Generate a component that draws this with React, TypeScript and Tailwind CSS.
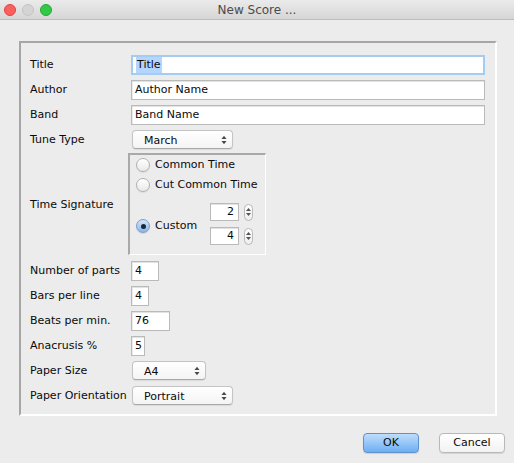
import React from "react";

function UpDown({ className = "" }: { className?: string }) {
  return (
    <svg width="6" height="10" viewBox="0 0 6 10" className={className}>
      <path d="M0.5 4 L3 0.8 L5.5 4 Z" fill="#4a4a4a" />
      <path d="M0.5 6 L3 9.2 L5.5 6 Z" fill="#4a4a4a" />
    </svg>
  );
}

function Select({ value, w }: { value: string; w: string }) {
  return (
    <div
      className={`${w} h-[19px] rounded-[4px] border border-[#c4c4c4] border-b-[#a9a9a9] bg-gradient-to-b from-white to-[#f4f4f4] shadow-[0_1px_1px_rgba(0,0,0,0.08)] flex items-center pl-[11px] pr-[5px]`}
    >
      <span className="flex-1 leading-none pt-[1px]">{value}</span>
      <UpDown />
    </div>
  );
}

function Field({ value, w, focus = false }: { value: React.ReactNode; w: string; focus?: boolean }) {
  return (
    <div
      className={`${w} h-[20px] bg-white flex items-center pl-[3px] pt-[1px] ${
        focus
          ? "border-2 border-[#a4cbf2]"
          : "border border-[#bababa] shadow-[inset_0_1px_0_#e2e2e2,inset_1px_0_0_#ececec]"
      }`}
    >
      {value}
    </div>
  );
}

function Radio({ checked = false }: { checked?: boolean }) {
  return checked ? (
    <div className="w-[14px] h-[14px] rounded-full border border-[#7d9dc4] bg-gradient-to-b from-[#d3e5f9] to-[#86b6ec] flex items-center justify-center shadow-[0_1px_1px_rgba(0,0,0,0.1)]">
      <div className="w-[5px] h-[5px] rounded-full bg-[#1d2533]" />
    </div>
  ) : (
    <div className="w-[14px] h-[14px] rounded-full border border-[#b0b0b0] bg-gradient-to-b from-white to-[#e9e9e9] shadow-[0_1px_1px_rgba(0,0,0,0.08)]" />
  );
}

function Spin({ value }: { value: string }) {
  return (
    <div className="flex items-center gap-[5px]">
      <div className="w-[29px] h-[18px] bg-white border border-[#bababa] shadow-[inset_0_1px_0_#e2e2e2] flex items-center justify-end pr-[4px] pt-[1px]">
        {value}
      </div>
      <div className="w-[9px] h-[17px] rounded-[5px] border border-[#b9b9b9] bg-gradient-to-b from-white to-[#eeeeee] flex flex-col items-center justify-center gap-[2px]">
        <svg width="5" height="3" viewBox="0 0 5 3"><path d="M0 3 L2.5 0 L5 3 Z" fill="#555" /></svg>
        <svg width="5" height="3" viewBox="0 0 5 3"><path d="M0 0 L2.5 3 L5 0 Z" fill="#555" /></svg>
      </div>
    </div>
  );
}

function Row({ label, children }: { label: string; children: React.ReactNode }) {
  return (
    <div className="flex items-center h-[25px]">
      <div className="w-[101px] whitespace-nowrap pt-[1px]">{label}</div>
      {children}
    </div>
  );
}

export default function App() {
  return (
    <div className="w-[514px] h-[463px] bg-[#ececec] overflow-hidden text-[11px] text-[#0a0a0a] font-['DejaVu_Sans',sans-serif]">
      <div className="h-[20px] grid grid-cols-[1fr_auto_1fr] items-center bg-gradient-to-b from-[#ebebeb] to-[#d6d6d6] border-b border-[#bdbdbd]">
        <div className="flex items-center gap-[6px] pl-[4px]">
          <div className="w-[12px] h-[12px] rounded-full bg-[#fc605c] border border-[#e0443e]" />
          <div className="w-[12px] h-[12px] rounded-full bg-[#d4d4d4] border border-[#c4c4c4]" />
          <div className="w-[12px] h-[12px] rounded-full bg-[#34c84a] border border-[#1eab31]" />
        </div>
        <div className="text-[12px] text-[#4b4b4b] leading-none pt-[1px]">New Score ...</div>
        <div />
      </div>

      <div className="mt-[21px] ml-[19px] w-[478px] h-[375px] border-t-2 border-l-2 border-t-[#a6a6a6] border-l-[#a6a6a6] border-r-2 border-b-2 border-r-white border-b-white pt-[9px] pl-[9px]">
        <Row label="Title">
          <Field
            w="w-[354px]"
            focus
            value={<span className="bg-[#b4d5fd] px-[1px]">Title</span>}
          />
        </Row>
        <Row label="Author">
          <Field w="w-[354px]" value="Author Name" />
        </Row>
        <Row label="Band">
          <Field w="w-[354px]" value="Band Name" />
        </Row>
        <Row label="Tune Type">
          <div className="pl-[1px]">
            <Select value="March" w="w-[101px]" />
          </div>
        </Row>

        <div className="flex h-[106px]">
          <div className="w-[98px] self-center whitespace-nowrap pt-[1px]">Time Signature</div>
          <div className="mt-[1px] w-[138px] h-[102px] border-t-2 border-l-2 border-t-[#a9a9a9] border-l-[#a9a9a9] border-r border-b border-r-white border-b-white pl-[6px] flex flex-col">
            <div className="h-[20px] flex items-center gap-[5px]">
              <Radio />
              <span className="pt-[1px]">Common Time</span>
            </div>
            <div className="h-[20px] flex items-center gap-[5px]">
              <Radio />
              <span className="pt-[1px]">Cut Common Time</span>
            </div>
            <div className="flex items-center mt-[8px]">
              <div className="w-[74px] flex items-center gap-[5px] pt-[4px]">
                <Radio checked />
                <span className="pt-[1px]">Custom</span>
              </div>
              <div className="flex flex-col gap-[6px]">
                <Spin value="2" />
                <Spin value="4" />
              </div>
            </div>
          </div>
        </div>

        <Row label="Number of parts">
          <Field w="w-[28px]" value="4" />
        </Row>
        <Row label="Bars per line">
          <Field w="w-[18px]" value="4" />
        </Row>
        <Row label="Beats per min.">
          <Field w="w-[39px]" value="76" />
        </Row>
        <Row label="Anacrusis %">
          <Field w="w-[14px]" value="5" />
        </Row>
        <Row label="Paper Size">
          <div className="pl-[1px]">
            <Select value="A4" w="w-[74px]" />
          </div>
        </Row>
        <Row label="Paper Orientation">
          <div className="pl-[1px]">
            <Select value="Portrait" w="w-[101px]" />
          </div>
        </Row>
      </div>

      <div className="mt-[17px] flex justify-end gap-[20px] pr-[9px]">
        <div className="w-[56px] h-[20px] rounded-[4px] border border-[#5f93cf] bg-gradient-to-b from-[#c0ddfb] to-[#6caef2] flex items-center justify-center pt-[1px] shadow-[0_1px_1px_rgba(0,0,0,0.12)]">
          OK
        </div>
        <div className="w-[66px] h-[20px] rounded-[4px] border border-[#b8b8b8] bg-gradient-to-b from-white to-[#f2f2f2] flex items-center justify-center pt-[1px] shadow-[0_1px_1px_rgba(0,0,0,0.1)]">
          Cancel
        </div>
      </div>
    </div>
  );
}
